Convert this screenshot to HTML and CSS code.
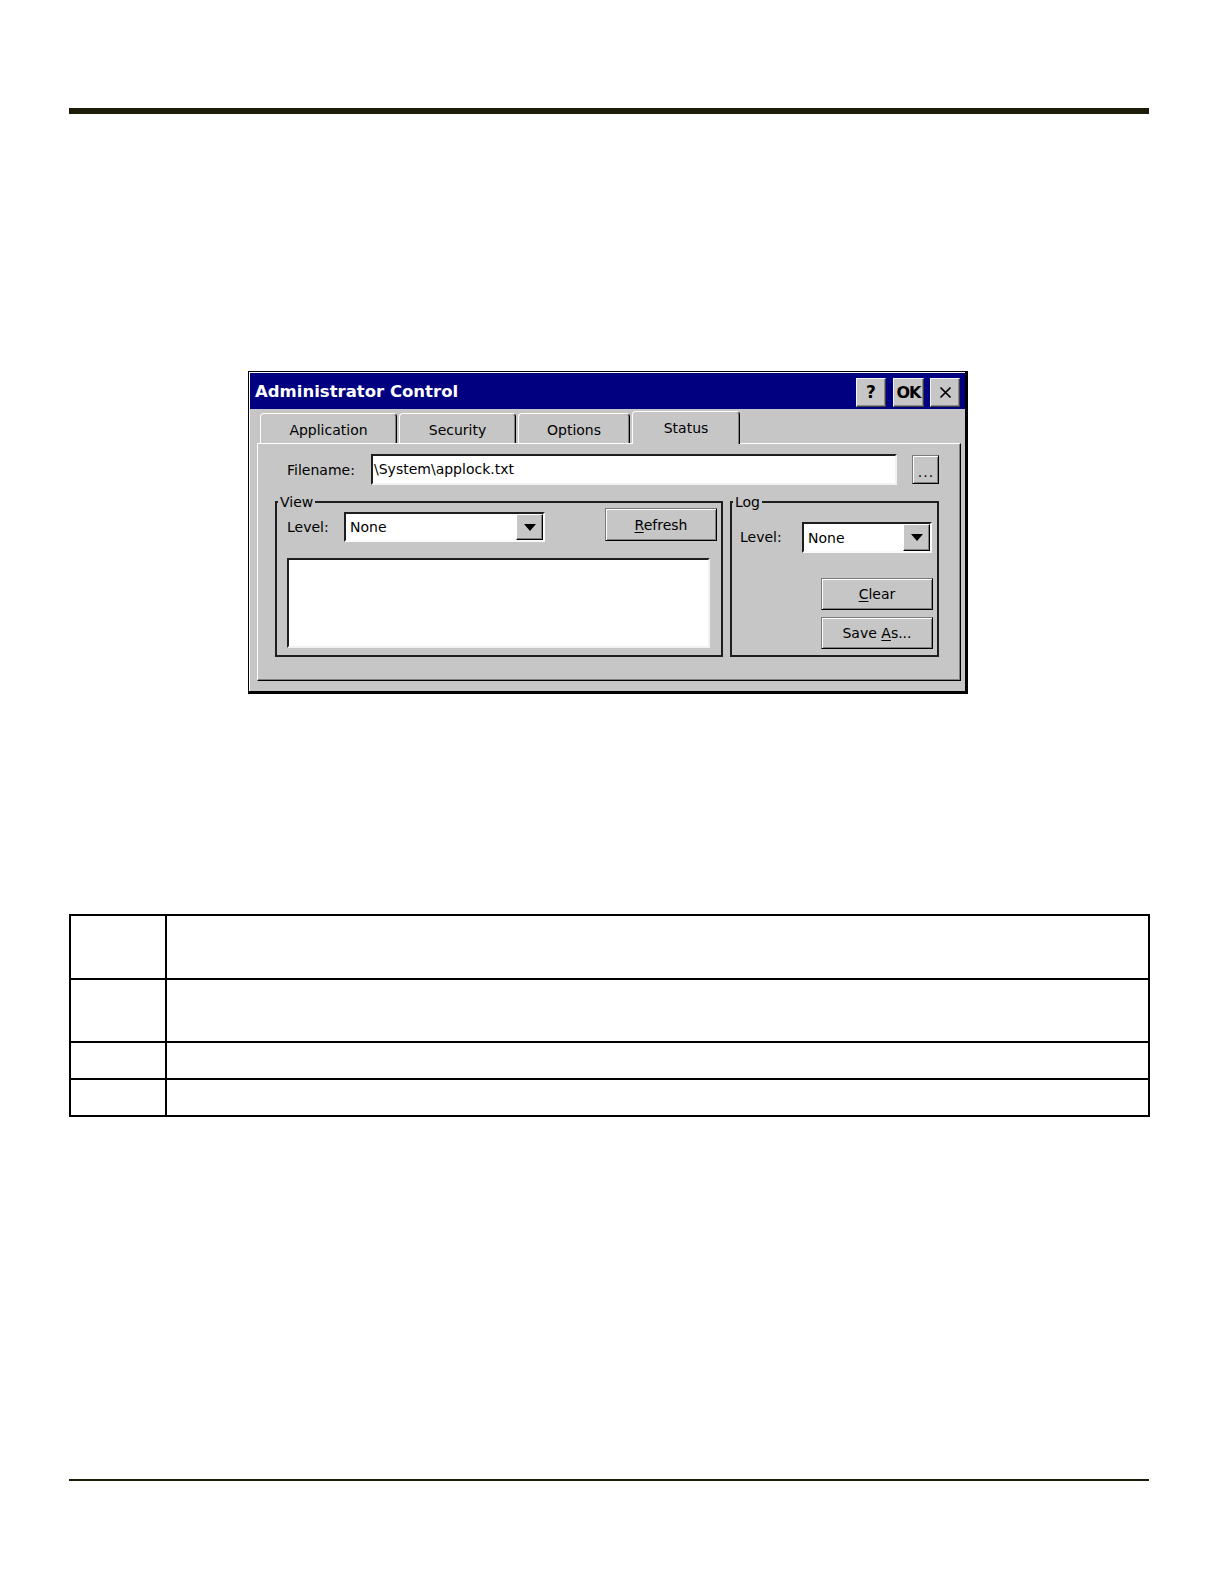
FILE: index.html
```html
<!DOCTYPE html>
<html lang="en">
<head>
<meta charset="utf-8">
<title>Administrator Control</title>
<link rel="stylesheet" href="styles.css">
</head>
<body>
<div class="page">
  <div class="rule-top"></div>

  <div class="dialog">
    <div class="titlebar">
      <span class="title">Administrator Control</span>
      <span class="tbtn tbtn-help">?</span>
      <span class="tbtn tbtn-ok">OK</span>
      <span class="tbtn tbtn-close">
        <svg width="13" height="13" viewBox="0 0 13 13"><path d="M1.5 1.5L11.5 11.5M11.5 1.5L1.5 11.5" stroke="#000" stroke-width="1.7" fill="none"/></svg>
      </span>
    </div>

    <div class="dlg-body">
      <div class="tabs">
        <div class="tab tab-app">Application</div>
        <div class="tab tab-sec">Security</div>
        <div class="tab tab-opt">Options</div>
        <div class="tab tab-status active">Status</div>
      </div>

      <div class="panel">
        <div class="file-row">
          <span class="lbl lbl-file">Filename:</span>
          <div class="field file-field">\System\applock.txt</div>
          <div class="btn btn-browse">...</div>
        </div>

        <div class="groups">
          <fieldset class="group group-view">
            <legend>View</legend>
            <div class="view-row">
              <span class="lbl lbl-view">Level:</span>
              <div class="combo combo-view">
                <span class="combo-text">None</span>
                <span class="combo-btn"><svg width="12" height="7" viewBox="0 0 12 7"><path d="M0 0H12L6 7Z" fill="#000"/></svg></span>
              </div>
              <div class="btn btn-refresh"><span><u>R</u>efresh</span></div>
            </div>
            <div class="field listbox"></div>
          </fieldset>

          <fieldset class="group group-log">
            <legend>Log</legend>
            <div class="log-row">
              <span class="lbl lbl-log">Level:</span>
              <div class="combo combo-log">
                <span class="combo-text">None</span>
                <span class="combo-btn"><svg width="12" height="7" viewBox="0 0 12 7"><path d="M0 0H12L6 7Z" fill="#000"/></svg></span>
              </div>
            </div>
            <div class="btn btn-clear"><span><u>C</u>lear</span></div>
            <div class="btn btn-save"><span>Save <u>A</u>s...</span></div>
          </fieldset>
        </div>
      </div>
    </div>
  </div>

  <div class="doc-table">
    <div class="cell"></div><div class="cell"></div>
    <div class="cell"></div><div class="cell"></div>
    <div class="cell"></div><div class="cell"></div>
    <div class="cell"></div><div class="cell"></div>
  </div>

  <div class="rule-bottom"></div>
</div>
</body>
</html>
```

FILE: styles.css
```css
* { box-sizing: border-box; }

body {
  margin: 0;
  background: #fff;
  color: #000;
  font-family: "DejaVu Sans", "Liberation Sans", sans-serif;
  font-size: 14px;
}

.page {
  width: 1224px;
  height: 1584px;
  padding: 108px 0 0 69px;
  overflow: hidden;
}

.rule-top {
  width: 1080px;
  height: 6px;
  background: #1c1c08;
}

.rule-bottom {
  width: 1080px;
  height: 2px;
  margin-top: 362px;
  background: #1c1c08;
}

/* ---------- dialog ---------- */
.dialog {
  margin: 257px 0 0 179px;
  width: 720px;
  height: 323px;
  border: 1px solid #000;
  border-right-width: 3px;
  border-bottom-width: 3px;
  background: #c6c6c6;
  box-shadow: inset 1px 1px 0 #fff;
  padding: 1px 0 0 1px;
  display: flex;
  flex-direction: column;
}

.titlebar {
  flex: none;
  height: 36px;
  background: #000080;
  display: flex;
  align-items: flex-start;
  padding-right: 5px;
}

.title {
  color: #fff;
  font-weight: bold;
  font-size: 16.5px;
  line-height: 20px;
  margin: 9px 0 0 5px;
  white-space: nowrap;
}

.tbtn {
  margin-top: 5px;
  height: 29px;
  background: #c6c6c6;
  border: 1px solid;
  border-color: #f4f4f4 #404040 #404040 #f4f4f4;
  box-shadow: inset -1px -1px 0 #8a8a8a;
  display: flex;
  align-items: center;
  justify-content: center;
  font-weight: bold;
  font-size: 17px;
  line-height: 1;
}

.tbtn-help { margin-left: auto; width: 30px; }
.tbtn-ok { margin-left: 7px; width: 31px; font-size: 16px; letter-spacing: -1px; }
.tbtn-close { margin-left: 6px; width: 30px; }

.dlg-body {
  flex: 1;
  display: flex;
  flex-direction: column;
  padding: 0 4px 10px 7px;
}

/* ---------- tabs ---------- */
.tabs {
  flex: none;
  height: 34px;
  display: flex;
  align-items: flex-end;
  padding-left: 3px;
}

.tab {
  height: 30px;
  margin-right: 2px;
  border: 1px solid;
  border-bottom: none;
  border-color: #fff #000 transparent #fff;
  border-radius: 4px 4px 0 0;
  box-shadow: inset -1px 0 0 #808080;
  display: flex;
  align-items: center;
  justify-content: center;
  padding-top: 3px;
  white-space: nowrap;
}

.tab-app { width: 137px; }
.tab-sec { width: 117px; }
.tab-opt { width: 112px; }

.tab.active {
  width: 108px;
  height: 33px;
  margin-bottom: -1px;
  padding-top: 0;
  background: #c6c6c6;
  position: relative;
  z-index: 1;
}

/* ---------- panel ---------- */
.panel {
  flex: none;
  height: 238px;
  border: 1px solid;
  border-color: #fff #000 #000 #fff;
  box-shadow: inset -1px -1px 0 #808080;
  padding-top: 10px;
}

.lbl { white-space: nowrap; line-height: 16px; }

.file-row {
  display: flex;
  align-items: center;
  height: 31px;
  margin-left: 29px;
}

.lbl-file { width: 84px; }

.field {
  background: #fff;
  border: 2px solid;
  border-color: #1e1e1e #f2f2f2 #f2f2f2 #1e1e1e;
}

.file-field {
  width: 526px;
  height: 31px;
  display: flex;
  align-items: center;
  padding: 0 0 2px 1px;
  white-space: nowrap;
}

.btn {
  background: #c6c6c6;
  border: 1px solid;
  border-color: #7a7a7a #000 #000 #7a7a7a;
  box-shadow: inset 1px 1px 0 #fff, inset -1px -1px 0 #808080;
  display: flex;
  align-items: center;
  justify-content: center;
  white-space: nowrap;
}

.btn u { text-underline-offset: 2px; }

.btn-browse {
  width: 27px;
  height: 29px;
  margin-left: 15px;
  font-size: 14px;
  letter-spacing: 1px;
  padding: 4px 0 0 1px;
}

/* ---------- groups ---------- */
.groups {
  display: flex;
  gap: 7px;
  margin: 11px 0 0 17px;
}

.group {
  margin: 0;
  padding: 0 0 7px 0;
  min-width: 0;
  border: 2px solid #1e1e1e;
}

.group legend {
  margin-left: 1px;
  padding: 0 2px;
  line-height: 12px;
  font-size: 14px;
}

.group-view { width: 448px; }
.group-log { width: 209px; padding-bottom: 5px; }

.view-row, .log-row {
  display: flex;
  align-items: flex-start;
}

.lbl-view { width: 57px; margin: 11px 0 0 10px; }

.combo {
  display: flex;
  background: #fff;
  border: 2px solid;
  border-color: #1e1e1e #fafafa #fafafa #1e1e1e;
}

.combo-text {
  flex: 1;
  display: flex;
  align-items: center;
  padding-left: 4px;
}

.combo-btn {
  width: 27px;
  background: #c6c6c6;
  border: 1px solid;
  border-color: #fff #000 #000 #fff;
  box-shadow: inset -1px -1px 0 #808080;
  display: flex;
  align-items: center;
  justify-content: center;
}

.combo-view { width: 201px; height: 30px; margin-top: 4px; }

.btn-refresh {
  width: 112px;
  height: 33px;
  margin-left: 60px;
}

.listbox {
  width: 423px;
  height: 90px;
  margin: 16px 0 0 10px;
}

.lbl-log { width: 62px; margin: 21px 0 0 8px; }

.combo-log { width: 130px; height: 31px; margin-top: 14px; }

.btn-clear, .btn-save {
  width: 112px;
  height: 32px;
  margin-left: auto;
  margin-right: 4px;
}

.btn-clear { margin-top: 25px; }
.btn-save { margin-top: 7px; }

/* ---------- table ---------- */
.doc-table {
  margin-top: 220px;
  width: 1081px;
  display: grid;
  grid-template-columns: 96px 983px;
  grid-template-rows: 64px 63px 37px 37px;
  border-top: 2px solid #000;
  border-left: 2px solid #000;
}

.cell {
  border-right: 2px solid #000;
  border-bottom: 2px solid #000;
}
```
